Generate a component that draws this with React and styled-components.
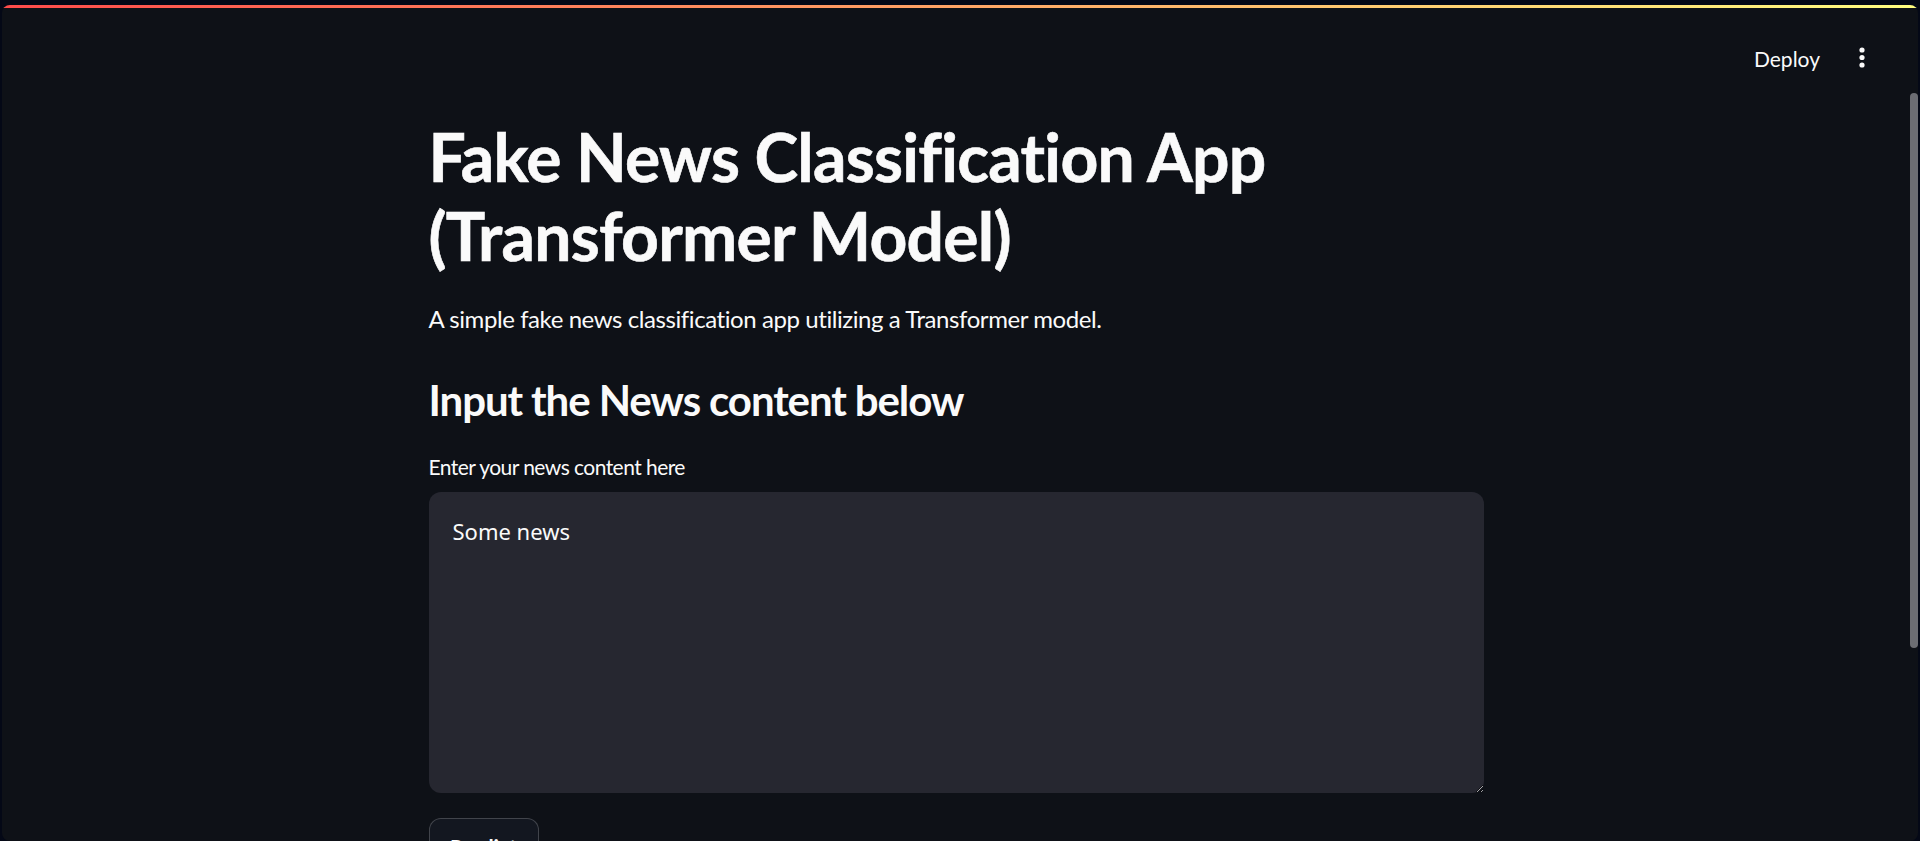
import React from "react";
import styled, { createGlobalStyle } from "styled-components";

const Global = createGlobalStyle`
  html, body { margin: 0; padding: 0; height: 100%; }
  body {
    background: #040816;
    font-family: Lato, "Noto Sans", sans-serif;
    color: #fafafa;
    overflow: hidden;
  }
  #root { height: 100%; }
`;

const Frame = styled.div`
  height: 100vh;
  box-sizing: border-box;
  padding: 5px 2px 0 2px;
`;

const AppShell = styled.div`
  position: relative;
  height: 100%;
  background: #0e1117;
  border-radius: 8px;
  overflow: hidden;
  display: flex;
  flex-direction: column;
`;

const Decoration = styled.div`
  height: 3px;
  flex: none;
  background: linear-gradient(90deg, rgb(255, 75, 75), rgb(255, 253, 128));
`;

const Header = styled.header`
  flex: none;
  height: 100px;
  display: flex;
  align-items: center;
  justify-content: flex-end;
  padding-right: 36px;
  gap: 10px;
`;

const DeployButton = styled.button`
  background: transparent;
  border: none;
  color: #fafafa;
  font-family: Lato, "Noto Sans", sans-serif;
  font-size: 21px;
  padding: 0 12px;
  height: 48px;
  cursor: pointer;
`;

const IconButton = styled.button`
  width: 40px;
  height: 40px;
  display: flex;
  align-items: center;
  justify-content: center;
  background: transparent;
  border: none;
  padding: 0;
  color: #fafafa;
`;

const Main = styled.main`
  flex: 1;
  display: flex;
  justify-content: center;
`;

const Block = styled.div`
  width: 1055px;
  margin-left: -8px;
  display: flex;
  flex-direction: column;
`;

const Title = styled.h1`
  margin: 9px 0 0 0;
  font-size: 66px;
  font-weight: 700;
  line-height: 1.2;
  letter-spacing: -0.75px;
  -webkit-text-stroke: 0.6px #fafafa;
`;

const Lead = styled.p`
  margin: 25px 0 0 0;
  font-size: 24px;
  line-height: 1.6;
  letter-spacing: -0.42px;
`;

const Subheader = styled.h3`
  margin: 36px 0 0 0;
  font-size: 42px;
  font-weight: 700;
  line-height: 1.2;
  letter-spacing: -1.1px;
`;

const Label = styled.label`
  margin-top: 26px;
  font-size: 21px;
  line-height: 1.5;
  letter-spacing: -0.55px;
`;

const TextArea = styled.textarea`
  margin-top: 9px;
  box-sizing: border-box;
  width: 100%;
  height: 301px;
  background: #262730;
  border: none;
  border-radius: 12px;
  color: #fafafa;
  font-family: "Noto Sans", sans-serif;
  font-size: 22px;
  line-height: 1.5;
  padding: 23px 24px;
  resize: vertical;
  outline: none;
`;

const Button = styled.button`
  margin-top: 25px;
  align-self: flex-start;
  width: 110px;
  height: 58px;
  background: #131720;
  border: 1px solid rgba(250, 250, 250, 0.2);
  border-radius: 12px;
  color: #fafafa;
  font-family: Lato, "Noto Sans", sans-serif;
  font-size: 21px;
  font-weight: 700;
`;

const ScrollThumb = styled.div`
  position: absolute;
  right: 0;
  top: 88px;
  width: 8px;
  height: 555px;
  background: #6c6d73;
  border-radius: 4px;
`;

function Kebab() {
  return (
    <svg width="6" height="22" viewBox="0 0 6 22">
      <circle cx="3" cy="3" r="2.6" fill="#fafafa" />
      <circle cx="3" cy="10.5" r="2.6" fill="#fafafa" />
      <circle cx="3" cy="18" r="2.6" fill="#fafafa" />
    </svg>
  );
}

export default function App() {
  return (
    <>
      <Global />
      <Frame>
        <AppShell>
          <Decoration />
          <Header>
            <DeployButton>Deploy</DeployButton>
            <IconButton aria-label="menu">
              <Kebab />
            </IconButton>
          </Header>
          <Main>
            <Block>
              <Title>
                Fake News Classification App
                <br />
                (Transformer Model)
              </Title>
              <Lead>A simple fake news classification app utilizing a Transformer model.</Lead>
              <Subheader>Input the News content below</Subheader>
              <Label htmlFor="news">Enter your news content here</Label>
              <TextArea id="news" defaultValue="Some news" />
              <Button>Predict</Button>
            </Block>
          </Main>
          <ScrollThumb />
        </AppShell>
      </Frame>
    </>
  );
}
